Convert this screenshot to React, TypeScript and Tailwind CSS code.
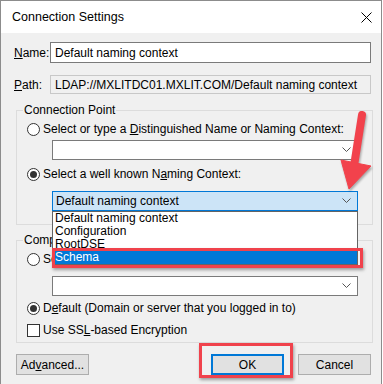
import type { ReactNode } from 'react'

const font = { fontFamily: '"Liberation Sans", Arial, sans-serif' }

function Radio({ checked, children }: { checked?: boolean; children: ReactNode }) {
  return (
    <div className="flex items-center h-[16px] gap-[3px]">
      <span className="w-[13px] h-[13px] rounded-full border border-[#333] bg-white flex items-center justify-center shrink-0">
        {checked && <span className="w-[7px] h-[7px] rounded-full bg-[#333]" />}
      </span>
      <span className="whitespace-nowrap">{children}</span>
    </div>
  )
}

function Chevron() {
  return (
    <svg width="9" height="6" viewBox="0 0 9 6" className="shrink-0">
      <polyline points="0.5,0.5 4.5,4.5 8.5,0.5" fill="none" stroke="#555" strokeWidth="1" />
    </svg>
  )
}

function Combo({ text, focused }: { text?: string; focused?: boolean }) {
  return (
    <div
      className={`ml-[25px] w-[306px] h-[20px] border flex items-center justify-between pl-[3px] pr-[6px] ${
        focused ? 'bg-[#cce4f7] border-[#0078d7]' : 'bg-white border-[#7a7a7a]'
      }`}
    >
      <span className="whitespace-nowrap">{text}</span>
      <Chevron />
    </div>
  )
}

function Button({ children, def }: { children: ReactNode; def?: boolean }) {
  return (
    <div
      className={`w-[73px] h-[21px] bg-[#e1e1e1] flex items-center justify-center ${
        def ? 'border-2 border-[#0078d7]' : 'border border-[#adadad]'
      }`}
    >
      {children}
    </div>
  )
}

export default function App() {
  return (
    <div className="relative w-[383px] h-[384px] bg-white overflow-hidden text-[12px] leading-[16px] text-black" style={font}>
      <div className="w-[382px] h-[400px] border border-[#8c8c8c] bg-[#f0f0f0] flex flex-col">
        {/* title bar */}
        <div className="h-[32px] bg-white flex items-center justify-between pl-[11px] pr-[9px] shrink-0">
          <span className="text-[12.5px]">Connection Settings</span>
          <svg width="11" height="11" viewBox="0 0 11 11">
            <path d="M0.5 0.5 L10.5 10.5 M10.5 0.5 L0.5 10.5" stroke="#000" strokeWidth="1" />
          </svg>
        </div>

        <div className="pl-[15px] flex flex-col">
          {/* name / path */}
          <div className="flex items-center mt-[9px] h-[21px]">
            <span className="w-[36px] -ml-[2px]">
              <u>N</u>ame:
            </span>
            <div className="w-[321px] h-[21px] border border-[#7a7a7a] bg-white flex items-center px-[4px]">Default naming context</div>
          </div>
          <div className="flex items-center mt-[12px] h-[19px]">
            <span className="w-[36px] -ml-[2px]">
              <u>P</u>ath:
            </span>
            <div className="w-[321px] h-[19px] border border-[#c8c8c8] bg-[#f0f0f0] flex items-center px-[4px] whitespace-nowrap">
              LDAP://MXLITDC01.MXLIT.COM/Default naming context
            </div>
          </div>

          {/* connection point */}
          <fieldset className="mt-[8px] w-[357px] border border-[#dcdcdc] pl-[10px] pb-[13px]">
            <legend className="-ml-[4px] px-[1px] leading-[16px]">Connection Point</legend>
            <div className="mt-[3px]">
              <Radio>
                Select or type a <u>D</u>istinguished Name or Naming Context:
              </Radio>
            </div>
            <div className="mt-[3px]">
              <Combo />
            </div>
            <div className="mt-[6px]">
              <Radio checked>
                Select a well known N<u>a</u>ming Context:
              </Radio>
            </div>
            <div className="mt-[9px]">
              <Combo text="Default naming context" focused />
            </div>
          </fieldset>

          {/* computer */}
          <fieldset className="mt-[7px] w-[357px] border border-[#dcdcdc] pl-[10px] pb-[4px]">
            <legend className="-ml-[4px] px-[1px] leading-[16px]">Computer</legend>
            <div className="mt-[3px]">
              <Radio>Select or type a domain or server:</Radio>
            </div>
            <div className="mt-[9px]">
              <Combo />
            </div>
            <div className="mt-[4px]">
              <Radio checked>
                D<u>e</u>fault (Domain or server that you logged in to)
              </Radio>
            </div>
            <div className="mt-[6px] flex items-center h-[16px] gap-[3px]">
              <span className="w-[13px] h-[13px] border border-[#333] bg-white shrink-0" />
              <span>
                Use SS<u>L</u>-based Encryption
              </span>
            </div>
          </fieldset>

          {/* buttons */}
          <div className="mt-[11px] w-[355px] flex items-center">
            <Button>
              Ad<u>v</u>anced...
            </Button>
            <div className="ml-auto flex gap-[14px]">
              <Button def>OK</Button>
              <Button>Cancel</Button>
            </div>
          </div>
        </div>
      </div>

      {/* open dropdown list */}
      <div className="absolute left-[52px] top-[211px] w-[306px] bg-white border border-[#646464] leading-[13px]">
        <div className="px-[2px] h-[13px]">Default naming context</div>
        <div className="px-[2px] h-[13px]">Configuration</div>
        <div className="px-[2px] h-[13px]">RootDSE</div>
        <div className="px-[2px] h-[13px] bg-[#0078d7] text-white">Schema</div>
      </div>

      {/* red highlight boxes */}
      <div className="absolute left-[52px] top-[248px] w-[311px] h-[20px] border-[3px] border-[#f0424c] shadow-[1px_2px_3px_rgba(0,0,0,0.35)]" />
      <div className="absolute left-[199px] top-[343px] w-[94px] h-[35px] border-[3px] border-[#f0424c] shadow-[1px_2px_3px_rgba(0,0,0,0.35)]" />

      {/* red arrow */}
      <svg className="absolute left-0 top-0" width="383" height="384" viewBox="0 0 383 384">
        <g fill="#f2424c" stroke="#f2424c" style={{ filter: 'drop-shadow(1px 2px 1px rgba(0,0,0,0.3))' }}>
          <line x1="362" y1="115" x2="354" y2="166" strokeWidth="8" strokeLinecap="round" />
          <polygon points="341,160 371,166 349,189" strokeWidth="1" strokeLinejoin="round" />
        </g>
      </svg>
    </div>
  )
}
